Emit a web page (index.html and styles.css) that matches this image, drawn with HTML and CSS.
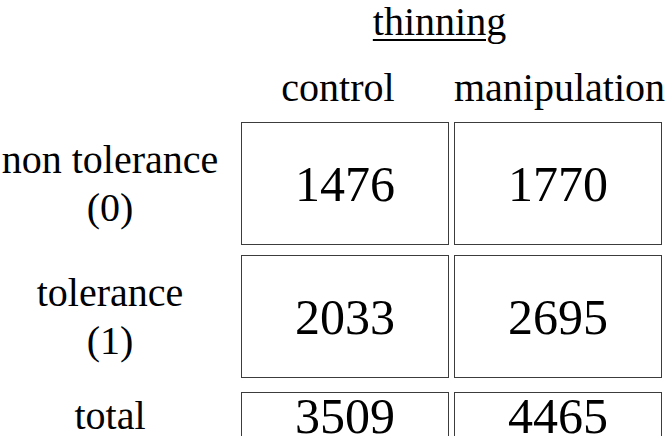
FILE: index.html
```html
<!DOCTYPE html>
<html lang="en">
<head>
    <meta charset="UTF-8">
    <meta name="viewport" content="width=device-width, initial-scale=1.0">
    <title>Thinning Table</title>
    <link rel="stylesheet" href="styles.css">
</head>
<body>
    <div class="table">
        <div class="row head-group">
            <div class="corner"></div>
            <div class="group-title"><span>thinning</span></div>
        </div>
        <div class="row head-cols">
            <div class="corner"></div>
            <div class="col-title col-control">control</div>
            <div class="col-title col-manip">manipulation</div>
        </div>
        <div class="row data-row">
            <div class="row-label">non tolerance<br>(0)</div>
            <div class="cell">1476</div>
            <div class="cell">1770</div>
        </div>
        <div class="row data-row">
            <div class="row-label">tolerance<br>(1)</div>
            <div class="cell">2033</div>
            <div class="cell">2695</div>
        </div>
        <div class="row total-row">
            <div class="row-label">total</div>
            <div class="cell">3509</div>
            <div class="cell">4465</div>
        </div>
    </div>
</body>
</html>
```

FILE: styles.css
```css
body {
    margin: 0;
    background-color: #fff;
    color: #000;
    font-family: 'Liberation Serif', 'Times New Roman', serif;
}
.table {
    width: 670px;
}
.row {
    display: grid;
    grid-template-columns: 236px 208px 208px;
    column-gap: 5px;
}
.head-group {
    height: 44px;
    margin-bottom: 22px;
}
.group-title {
    grid-column: 2 / 4;
    text-align: center;
    font-size: 40px;
    line-height: 44px;
    padding-right: 24px;
}
.group-title span {
    text-decoration: underline;
    text-decoration-thickness: 2px;
    text-underline-offset: 4px;
}
.head-cols {
    height: 44px;
    margin-bottom: 12px;
}
.col-title {
    text-align: center;
    font-size: 40px;
    line-height: 44px;
}
.col-control {
    padding-right: 14px;
}
.col-manip {
    padding-right: 4px;
}
.row-label {
    display: flex;
    align-items: center;
    justify-content: center;
    text-align: center;
    font-size: 40px;
    line-height: 48px;
    padding-right: 16px;
}
.cell {
    display: flex;
    align-items: center;
    justify-content: center;
    border: 1.5px solid #3c3c3c;
    box-sizing: border-box;
    font-size: 50px;
}
.data-row {
    height: 123px;
    margin-bottom: 10px;
}
.total-row {
    height: 44px;
    margin-top: 14px;
}
.total-row .cell {
    line-height: 42px;
}
```
